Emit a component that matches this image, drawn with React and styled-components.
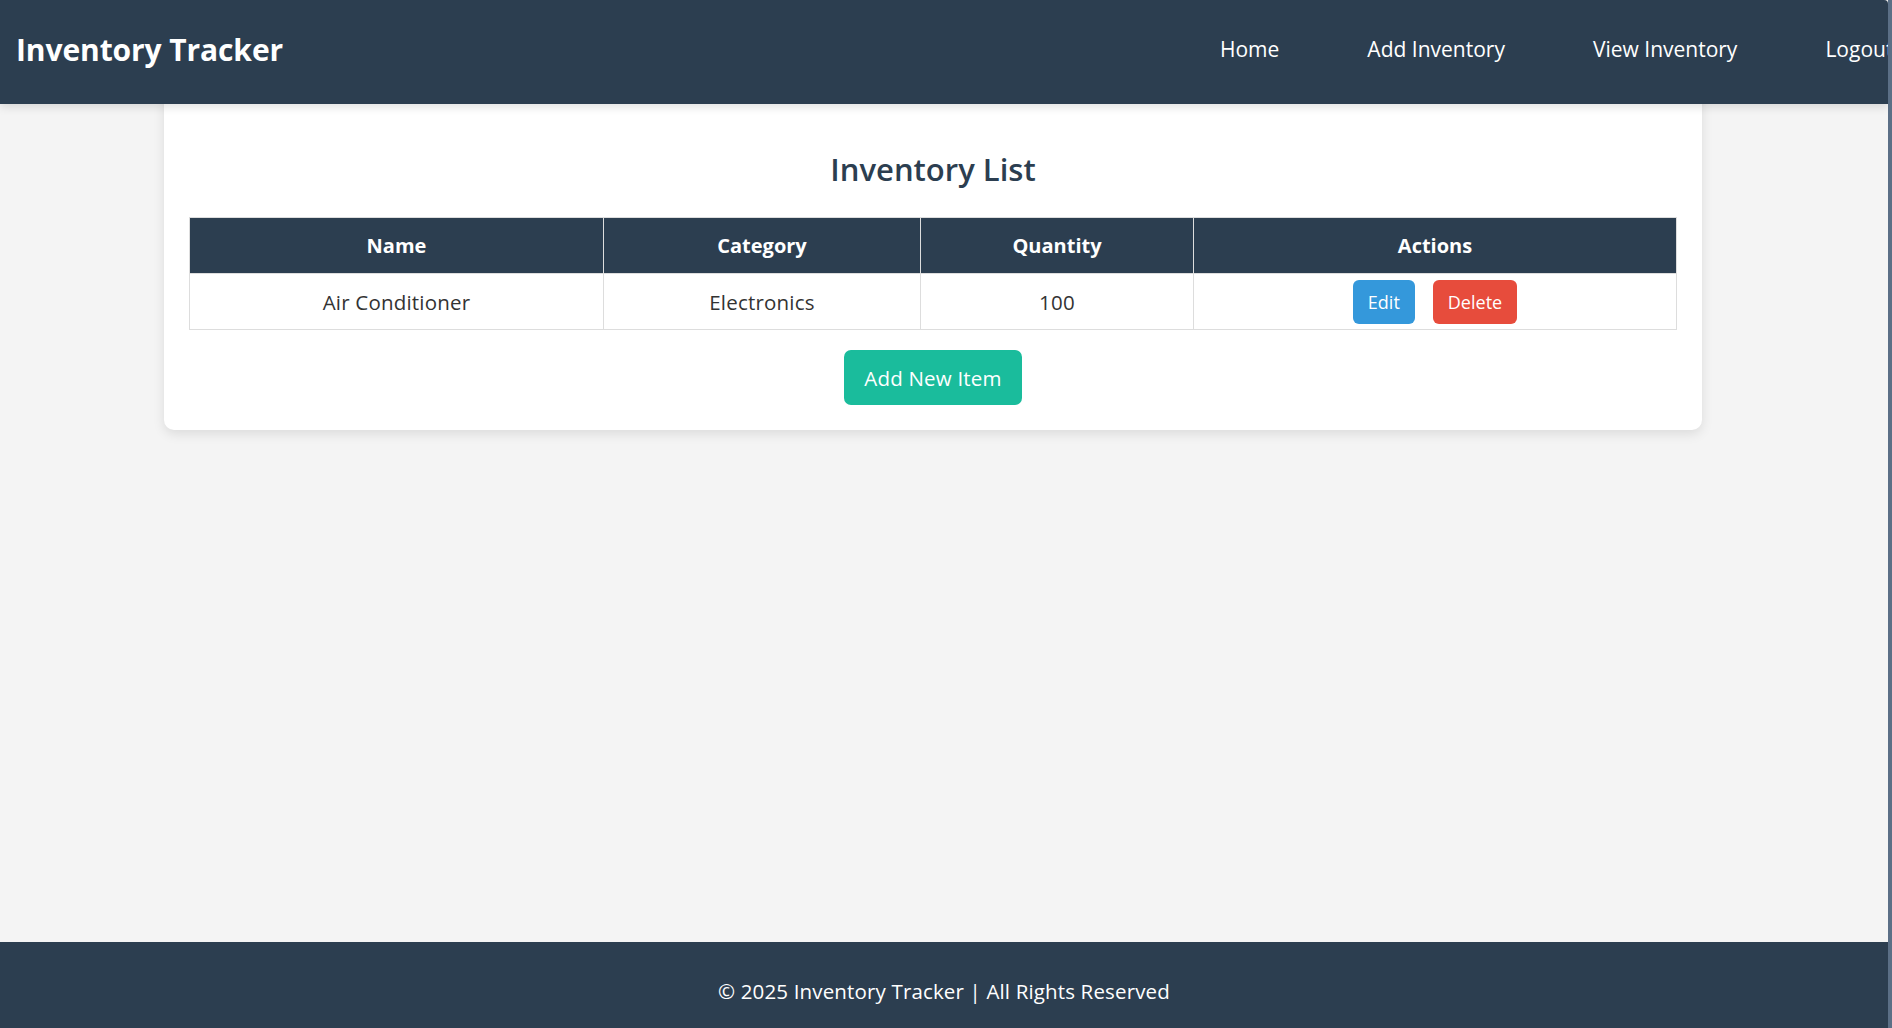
import React from "react";
import styled, { createGlobalStyle } from "styled-components";

const GlobalStyle = createGlobalStyle`
  html, body {
    margin: 0;
    padding: 0;
    background: #f4f4f4;
    font-family: "Open Sans", "Noto Sans", Arial, sans-serif;
    color: #333;
  }
  * {
    box-sizing: border-box;
  }
`;

const items = [{ name: "Air Conditioner", category: "Electronics", quantity: 100 }];

const navLinks = ["Home", "Add Inventory", "View Inventory", "Logout"];

export default function App() {
  return (
    <>
      <GlobalStyle />
      <Page>
        <Header>
          <Brand>Inventory Tracker</Brand>
          <Nav>
            {navLinks.map(link => (
              <NavLink key={link} href="#">
                {link}
              </NavLink>
            ))}
          </Nav>
        </Header>
        <Main>
          <Card>
            <Title>Inventory List</Title>
            <Table>
              <thead>
                <tr>
                  <Th w={414}>Name</Th>
                  <Th w={317}>Category</Th>
                  <Th w={273}>Quantity</Th>
                  <Th w={483}>Actions</Th>
                </tr>
              </thead>
              <tbody>
                {items.map(item => (
                  <tr key={item.name}>
                    <Td>{item.name}</Td>
                    <Td>{item.category}</Td>
                    <Td>{item.quantity}</Td>
                    <Td>
                      <Actions>
                        <ActionButton bg="#3498db">Edit</ActionButton>
                        <ActionButton bg="#e74c3c">Delete</ActionButton>
                      </Actions>
                    </Td>
                  </tr>
                ))}
              </tbody>
            </Table>
            <AddRow>
              <AddButton>Add New Item</AddButton>
            </AddRow>
          </Card>
        </Main>
        <Footer>© 2025 Inventory Tracker | All Rights Reserved</Footer>
      </Page>
    </>
  );
}

const Page = styled.div`
  display: flex;
  flex-direction: column;
  min-height: 100vh;
  width: 100%;
  overflow: hidden;
  border-right: 4px solid #5b6f86;
`;

const Header = styled.header`
  position: relative;
  z-index: 2;
  height: 104px;
  flex-shrink: 0;
  background: #2c3e50;
  color: white;
  display: grid;
  grid-template-columns: 1204px max-content;
  align-items: center;
  padding: 0 0 6px 16px;
  box-shadow: 0 3px 10px rgba(0, 0, 0, 0.12);
  border-top-right-radius: 4px;
`;

const Brand = styled.h1`
  margin: 0;
  font-size: 30px;
  font-weight: 700;
  letter-spacing: -0.1px;
`;

const Nav = styled.nav`
  display: flex;
  gap: 88px;
  white-space: nowrap;
`;

const NavLink = styled.a`
  color: white;
  text-decoration: none;
  font-size: 21px;
`;

const Main = styled.main`
  flex: 1;
  padding-left: 164px;
`;

const Card = styled.section`
  width: 1538px;
  margin-top: -20px;
  background: white;
  border-radius: 10px;
  padding: 25px 25px 25px;
  box-shadow: 0 4px 12px rgba(0, 0, 0, 0.1);
`;

const Title = styled.h2`
  margin: 36px 0 24px;
  text-align: center;
  font-size: 31px;
  line-height: 48px;
  font-weight: 600;
  color: #2c3e50;
`;

const Table = styled.table`
  width: 100%;
  border-collapse: collapse;
  table-layout: fixed;
`;

const Th = styled.th`
  width: ${props => props.w}px;
  height: 56px;
  padding: 0 15px;
  background: #2c3e50;
  color: white;
  font-size: 20px;
  font-weight: 700;
  border: 1px solid #ddd;
  text-align: center;
`;

const Td = styled.td`
  height: 56px;
  padding: 0 15px;
  font-size: 20.5px;
  letter-spacing: 0.2px;
  color: #333;
  border: 1px solid #ddd;
  text-align: center;
  vertical-align: middle;
`;

const Actions = styled.div`
  display: flex;
  justify-content: center;
  gap: 18px;
`;

const ActionButton = styled.button`
  height: 44px;
  padding: 0 15px;
  border: none;
  border-radius: 6px;
  background: ${props => props.bg};
  color: white;
  font-family: inherit;
  font-size: 18px;
  letter-spacing: 0;
  cursor: pointer;
`;

const AddRow = styled.div`
  display: flex;
  justify-content: center;
  margin-top: 20px;
`;

const AddButton = styled.button`
  height: 55px;
  padding: 0 20px;
  border: none;
  border-radius: 7px;
  background: #1abc9c;
  color: white;
  font-family: inherit;
  font-size: 20.5px;
  letter-spacing: 0.2px;
  cursor: pointer;
`;

const Footer = styled.footer`
  height: 86px;
  flex-shrink: 0;
  background: #2c3e50;
  color: white;
  text-align: center;
  font-size: 20.5px;
  letter-spacing: 0.15px;
  line-height: 24px;
  padding-top: 37px;
`;
